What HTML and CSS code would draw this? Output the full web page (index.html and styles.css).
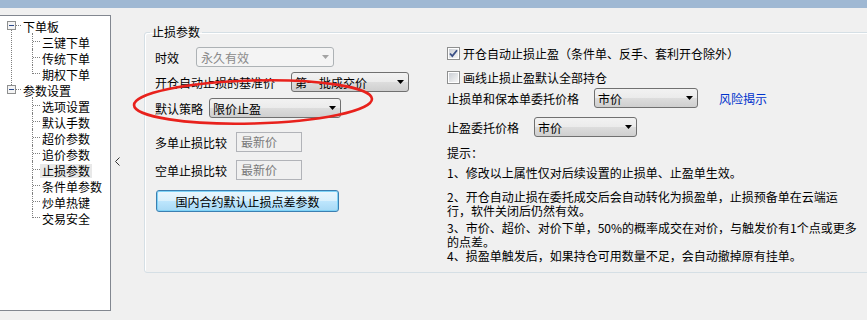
FILE: index.html
```html
<!DOCTYPE html>
<html lang="zh-CN">
<head>
    <meta charset="UTF-8">
    <meta name="viewport" content="width=device-width, initial-scale=1.0">
    <title>止损参数</title>
    <link rel="stylesheet" href="styles.css">
</head>
<body>
    <div class="titlebar"></div>

    <div class="main">
        <div class="tree-panel">
            <ul class="tree">
                <li>
                    <div class="item root">
                        <svg class="toggle" width="9" height="9" viewBox="0 0 9 9"><rect x="0.5" y="0.5" width="8" height="8" fill="#f4f4f4" stroke="#8e8f8f"/><path d="M2 4.5h5" stroke="#2c4a8c" stroke-width="1"/></svg>
                        <span class="label">下单板</span>
                    </div>
                    <ul class="children">
                        <li><div class="item"><span class="label">三键下单</span></div></li>
                        <li><div class="item"><span class="label">传统下单</span></div></li>
                        <li><div class="item"><span class="label">期权下单</span></div></li>
                    </ul>
                </li>
                <li>
                    <div class="item root">
                        <svg class="toggle" width="9" height="9" viewBox="0 0 9 9"><rect x="0.5" y="0.5" width="8" height="8" fill="#f4f4f4" stroke="#8e8f8f"/><path d="M2 4.5h5" stroke="#2c4a8c" stroke-width="1"/></svg>
                        <span class="label">参数设置</span>
                    </div>
                    <ul class="children">
                        <li><div class="item"><span class="label">选项设置</span></div></li>
                        <li><div class="item"><span class="label">默认手数</span></div></li>
                        <li><div class="item"><span class="label">超价参数</span></div></li>
                        <li><div class="item"><span class="label">追价参数</span></div></li>
                        <li><div class="item"><span class="label selected">止损参数</span></div></li>
                        <li><div class="item"><span class="label">条件单参数</span></div></li>
                        <li><div class="item"><span class="label">炒单热键</span></div></li>
                        <li><div class="item"><span class="label">交易安全</span></div></li>
                    </ul>
                </li>
            </ul>
        </div>

        <div class="splitter">
            <svg width="5" height="9" viewBox="0 0 5 9"><polyline points="4.5,0.5 0.5,4.5 4.5,8.5" fill="none" stroke="#333" stroke-width="1"/></svg>
        </div>

        <fieldset class="group">
            <legend>止损参数</legend>
            <div class="group-body">
                <div class="col-left">
                    <div class="field row-validity">
                        <span class="lbl lbl-validity">时效</span>
                        <div class="combo combo-validity disabled">
                            <span>永久有效</span>
                            <svg width="7" height="4" viewBox="0 0 7 4"><polygon points="0,0 7,0 3.5,4" fill="#a3a3a3"/></svg>
                        </div>
                    </div>
                    <div class="field row-base">
                        <span class="lbl lbl-base">开仓自动止损的基准价</span>
                        <div class="combo combo-base">
                            <span>第一批成交价</span>
                            <svg width="7" height="4" viewBox="0 0 7 4"><polygon points="0,0 7,0 3.5,4" fill="#000"/></svg>
                        </div>
                    </div>
                    <div class="field row-strategy">
                        <span class="lbl lbl-strategy">默认策略</span>
                        <div class="combo combo-strategy">
                            <span>限价止盈</span>
                            <svg width="7" height="4" viewBox="0 0 7 4"><polygon points="0,0 7,0 3.5,4" fill="#000"/></svg>
                        </div>
                    </div>
                    <div class="field row-long">
                        <span class="lbl lbl-compare">多单止损比较</span>
                        <div class="textbox">最新价</div>
                    </div>
                    <div class="field row-short">
                        <span class="lbl lbl-compare">空单止损比较</span>
                        <div class="textbox">最新价</div>
                    </div>
                    <button class="btn">国内合约默认止损点差参数</button>
                </div>

                <div class="col-right">
                    <label class="check-row check-first">
                        <svg class="checkbox" width="13" height="13" viewBox="0 0 13 13">
                            <defs><linearGradient id="cbg" x1="0" y1="0" x2="1" y2="1"><stop offset="0" stop-color="#cbcfd5"/><stop offset="1" stop-color="#f6f6f6"/></linearGradient></defs>
                            <rect x="0.5" y="0.5" width="12" height="12" fill="#fff" stroke="#8e8f8f"/>
                            <rect x="2" y="2" width="9" height="9" fill="url(#cbg)"/>
                            <path d="M3 6.5 L5.3 9 L10 3.2" fill="none" stroke="#3a4f86" stroke-width="1.8"/>
                        </svg>
                        开仓自动止损止盈（条件单、反手、套利开仓除外）
                    </label>
                    <label class="check-row check-second">
                        <svg class="checkbox" width="13" height="13" viewBox="0 0 13 13">
                            <rect x="0.5" y="0.5" width="12" height="12" fill="#fff" stroke="#8e8f8f"/>
                            <rect x="2" y="2" width="9" height="9" fill="url(#cbg)"/>
                        </svg>
                        画线止损止盈默认全部持仓
                    </label>
                    <div class="field row-stop-price">
                        <span class="lbl lbl-stop-price">止损单和保本单委托价格</span>
                        <div class="combo combo-stop-price">
                            <span>市价</span>
                            <svg width="7" height="4" viewBox="0 0 7 4"><polygon points="0,0 7,0 3.5,4" fill="#000"/></svg>
                        </div>
                        <a class="risk-link">风险揭示</a>
                    </div>
                    <div class="field row-take-price">
                        <span class="lbl lbl-take-price">止盈委托价格</span>
                        <div class="combo combo-take-price">
                            <span>市价</span>
                            <svg width="7" height="4" viewBox="0 0 7 4"><polygon points="0,0 7,0 3.5,4" fill="#000"/></svg>
                        </div>
                    </div>
                    <div class="tips-title">提示：</div>
                    <p class="tip tip-1">1、修改以上属性仅对后续设置的止损单、止盈单生效。</p>
                    <p class="tip tip-2">2、开仓自动止损在委托成交后会自动转化为损盈单，止损预备单在云端运<br>行，软件关闭后仍然有效。</p>
                    <p class="tip tip-3">3、市价、超价、对价下单，50%的概率成交在对价，与触发价有1个点或更多<br>的点差。</p>
                    <p class="tip tip-4">4、损盈单触发后，如果持仓可用数量不足，会自动撤掉原有挂单。</p>
                </div>
            </div>
        </fieldset>
    </div>

    <!-- red marker drawn over the dialog -->
    <svg class="mark" width="252" height="58" viewBox="0 0 252 58">
        <ellipse cx="125" cy="28" rx="119" ry="21.5" transform="rotate(-1.5 125 28)" fill="none" stroke="#e8211c" stroke-width="2.6"/>
    </svg>
</body>
</html>
```

FILE: styles.css
```css
* {
    margin: 0;
    padding: 0;
    box-sizing: border-box;
}

body {
    font-family: "Noto Sans CJK SC", "Liberation Sans", sans-serif;
    font-size: 12px;
    color: #000;
    background: #f0f0f0;
    height: 320px;
    overflow: hidden;
    position: relative;
}

.titlebar {
    height: 8px;
    background: #9fb8d3;
}

.main {
    display: flex;
    align-items: flex-start;
}

/* tree on the left */
.tree-panel {
    flex-shrink: 0;
    margin-top: 7px;
    width: 111px;
    height: 296px;
    background: #fff;
    border: 1px solid #828790;
    border-left: none;
}

.tree {
    list-style: none;
    padding-top: 1px;
}

.tree ul {
    list-style: none;
}

.tree li {
    position: relative;
}

.item {
    position: relative;
    height: 16px;
    line-height: 16px;
    white-space: nowrap;
}

.root {
    padding-left: 21px;
}

.children .item {
    padding-left: 40px;
}

.label {
    display: inline-block;
    padding: 0 2px;
    line-height: 14px;
    vertical-align: middle;
}

.label.selected {
    background: #e8e8e8;
}

.toggle {
    position: absolute;
    left: 7px;
    top: 4px;
}

.root::after {
    content: '';
    position: absolute;
    left: 16px;
    top: 8px;
    width: 5px;
    border-top: 1px dotted #7f7f7f;
}

.tree > li:first-child::before {
    content: '';
    position: absolute;
    left: 11px;
    top: 13px;
    bottom: -4px;
    border-left: 1px dotted #7f7f7f;
}

.children > li::before {
    content: '';
    position: absolute;
    left: 32px;
    top: 0;
    height: 16px;
    border-left: 1px dotted #7f7f7f;
}

.children > li:last-child::before {
    height: 9px;
}

.children > li::after {
    content: '';
    position: absolute;
    left: 33px;
    top: 8px;
    width: 7px;
    border-top: 1px dotted #7f7f7f;
}

.splitter {
    flex-shrink: 0;
    width: 33px;
    padding-top: 149px;
    padding-left: 4px;
}

.splitter svg {
    display: block;
}

/* group box */
.group {
    flex-shrink: 0;
    margin-top: 16px;
    width: 740px;
    border: 1px solid #d5dfe5;
    border-radius: 3px;
    box-shadow: inset 1px 1px 0 #fff;
    padding: 0;
}

.group legend {
    margin-left: 5px;
    padding: 0 2px;
    line-height: 16px;
}

.group-body {
    display: grid;
    grid-template-columns: 292px 1fr;
    height: 232px;
    padding-left: 10px;
}

.col-left,
.col-right {
    display: flex;
    flex-direction: column;
    align-items: flex-start;
}

.field {
    display: flex;
    align-items: center;
    height: 20px;
    white-space: nowrap;
}

.lbl {
    flex-shrink: 0;
}

.row-validity { margin-top: 7px; }
.row-base { margin-top: 5px; }
.row-strategy { margin-top: 6px; }
.row-long { margin-top: 14px; }
.row-short { margin-top: 8px; }

.lbl-validity { width: 41px; }
.lbl-base { width: 136px; }
.lbl-strategy { width: 54px; }
.lbl-compare { width: 81px; }

/* combo box */
.combo {
    display: flex;
    align-items: center;
    height: 20px;
    padding: 0 4px 0 3px;
    border: 1px solid #707070;
    border-radius: 3px;
    background: linear-gradient(#f2f2f2, #ebebeb 50%, #dddddd 50%, #cfcfcf);
}

.combo svg {
    margin-left: auto;
}

.combo.disabled {
    border-color: #adb2b5;
    background: #f4f4f4;
    color: #8a8a8a;
    padding-left: 4px;
}

.combo-validity { width: 138px; }
.combo-base { width: 118px; }
.combo-strategy { width: 132px; }
.combo-stop-price { width: 104px; }
.combo-take-price { width: 103px; }

.textbox {
    width: 66px;
    height: 20px;
    line-height: 18px;
    padding-left: 4px;
    border: 1px solid #b1b3b8;
    background: #f0f0f0;
    color: #7a7a7a;
}

.btn {
    margin-top: 10px;
    margin-left: 1px;
    width: 183px;
    height: 22px;
    font-family: inherit;
    font-size: 12px;
    color: #000;
    border: 1px solid #3c7fb1;
    border-radius: 3px;
    background: linear-gradient(#eaf6fd, #d9f0fc 50%, #bee6fd 50%, #a7d9f5);
    box-shadow: inset 0 0 0 1px #7fd3f7;
}

/* right column */
.check-row {
    display: flex;
    align-items: center;
    gap: 3px;
    height: 16px;
    white-space: nowrap;
}

.check-first { margin-top: 5px; }
.check-second { margin-top: 8px; }
.row-stop-price { margin-top: 3px; }
.row-take-price { margin-top: 9px; }

.lbl-stop-price { width: 147px; }
.lbl-take-price { width: 87px; }

.risk-link {
    margin-left: 21px;
    color: #0033cc;
    cursor: pointer;
}

.tips-title {
    margin-top: 8px;
    height: 16px;
    line-height: 16px;
}

.tip {
    line-height: 14px;
    white-space: nowrap;
}

.tip-1 { margin-top: 5px; }
.tip-2 { margin-top: 10px; }
.tip-3 { margin-top: 3px; }
.tip-4 { margin-top: 0; }

.mark {
    position: absolute;
    left: 128px;
    top: 74px;
}
```
